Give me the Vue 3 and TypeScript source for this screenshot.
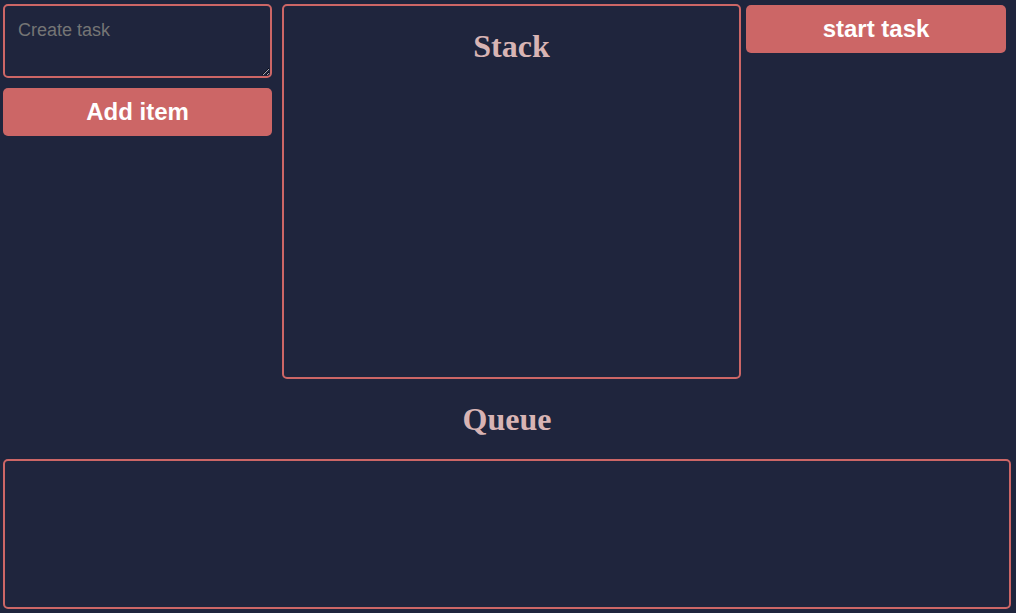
<script setup lang="ts">
import { ref } from 'vue'

const draft = ref<string>('')
const queue = ref<string[]>([])
const stack = ref<string[]>([])

function addItem(): void {
  const text = draft.value.trim()
  if (!text) return
  queue.value.push(text)
  draft.value = ''
}

function startTask(): void {
  const next = queue.value.shift()
  if (next !== undefined) stack.value.unshift(next)
}
</script>

<template>
  <main class="page">
    <div class="top">
      <form class="create" @submit.prevent="addItem">
        <textarea v-model="draft" class="field" placeholder="Create task" aria-label="Create task"></textarea>
        <button class="button" type="submit">Add item</button>
      </form>
      <section class="stack">
        <h1 class="title">Stack</h1>
        <p v-for="(task, i) in stack" :key="i" class="task">{{ task }}</p>
      </section>
      <div class="actions">
        <button class="button" type="button" @click="startTask">start task</button>
      </div>
    </div>
    <h1 class="title">Queue</h1>
    <section class="queue">
      <p v-for="(task, i) in queue" :key="i" class="task">{{ task }}</p>
    </section>
  </main>
</template>

<style>
body {
  background: #1f253d;
}
</style>

<style scoped>
.page {
  box-sizing: border-box;
  min-height: 100vh;
  padding: 4px 5px 4px 3px;
  display: flex;
  flex-direction: column;
  font-family: "Liberation Serif", "Times New Roman", serif;
}

.top {
  display: grid;
  grid-template-columns: minmax(0, 279fr) minmax(0, 459fr) minmax(0, 270fr);
  min-height: 375px;
}

.create {
  display: flex;
  flex-direction: column;
  gap: 10px;
  padding-right: 10px;
}

.field {
  box-sizing: border-box;
  width: 100%;
  height: 74px;
  padding: 13px;
  border: 2px solid #cc6666;
  border-radius: 5px;
  outline: none;
  background: transparent;
  color: #d8b4b4;
  font: 18px/22px "Liberation Sans", Arial, sans-serif;
}

.field::placeholder {
  color: #757575;
}

.button {
  width: 100%;
  height: 48px;
  padding: 0;
  border: none;
  border-radius: 5px;
  background: #cc6666;
  color: #ffffff;
  font: bold 24px/28px "Liberation Sans", Arial, sans-serif;
  cursor: pointer;
}

.stack {
  border: 2px solid #cc6666;
  border-radius: 5px;
}

.actions {
  padding: 1px 5px 0;
}

.title {
  margin: 22px 0;
  color: #d8b4b4;
  font-size: 32px;
  line-height: 36px;
  text-align: center;
}

.queue {
  box-sizing: border-box;
  min-height: 150px;
  display: flex;
  border: 2px solid #cc6666;
  border-radius: 5px;
}

.task {
  margin: 8px;
  color: #d8b4b4;
  font-size: 18px;
}
</style>
